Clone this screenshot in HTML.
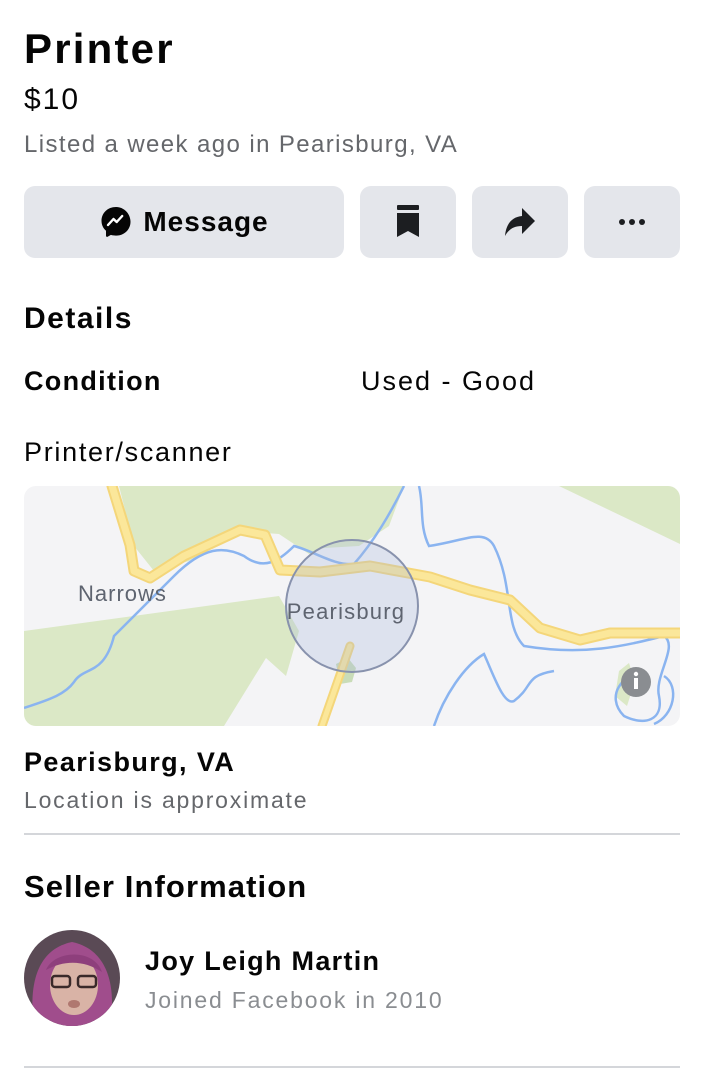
<!DOCTYPE html>
<html><head><meta charset="utf-8"><style>
*{margin:0;padding:0;box-sizing:border-box}
body{width:712px;height:1082px;background:#fff;font-family:"Liberation Sans",Arial,sans-serif;color:#050505;position:relative;overflow:hidden}
.a{position:absolute;white-space:nowrap;line-height:1}
.btn{position:absolute;top:186px;height:72px;background:#e4e6eb;border-radius:11px;display:flex;align-items:center;justify-content:center}
.hr{position:absolute;left:24px;width:656px;height:2px;background:#d4d6da}
</style></head><body>
<div class="a" style="left:24px;top:28px;font-size:42px;font-weight:bold;letter-spacing:2.2px">Printer</div>
<div class="a" style="left:24px;top:85px;font-size:30px;letter-spacing:2px">$10</div>
<div class="a" style="left:24px;top:133px;font-size:24px;color:#65676b;letter-spacing:1.4px">Listed a week ago in Pearisburg, VA</div>

<div class="btn" style="left:24px;width:320px">
<svg width="34" height="34" viewBox="0 0 34 34"><path d="M17 2C8.7 2 2.5 8 2.5 15.8c0 4.1 1.7 7.6 4.5 10v4.9c0 .9.9 1.4 1.6 1l3.3-1.8c1.6.5 3.3.7 5.1.7 8.3 0 14.5-6 14.5-13.8S25.3 2 17 2z" fill="#050505"/><path d="M9 20l5.5-6 3.2 3 5.5-6-5.5 6-3.2-3z" stroke="#fff" stroke-width="2.4" stroke-linejoin="round" stroke-linecap="round" fill="none"/></svg>
<span style="font-size:28px;font-weight:bold;margin-left:10px;letter-spacing:1px">Message</span></div>
<div class="btn" style="left:360px;width:96px"><svg width="24" height="34" viewBox="0 0 24 34"><rect x="1" y="0" width="22" height="5" rx="1" fill="#1c1e21"/><path d="M1 8h22v24l-11-6-11 6z" fill="#1c1e21"/></svg></div>
<div class="btn" style="left:472px;width:96px"><svg width="34" height="34" viewBox="0 0 34 34"><path d="M19 3l13 13-13 13v-8C11 21 6 24 2 31 3 20 8 12 19 11z" fill="#1c1e21"/></svg></div>
<div class="btn" style="left:584px;width:96px"><svg width="28" height="8" viewBox="0 0 28 8"><circle cx="4" cy="4" r="3" fill="#1c1e21"/><circle cx="14" cy="4" r="3" fill="#1c1e21"/><circle cx="24" cy="4" r="3" fill="#1c1e21"/></svg></div>

<div class="a" style="left:24px;top:304px;font-size:30px;font-weight:bold;letter-spacing:1.5px">Details</div>
<div class="a" style="left:24px;top:368px;font-size:27px;font-weight:bold;letter-spacing:1.3px">Condition</div>
<div class="a" style="left:361px;top:368px;font-size:27px;letter-spacing:2px">Used - Good</div>
<div class="a" style="left:24px;top:439px;font-size:27px;letter-spacing:1.7px">Printer/scanner</div>

<svg style="position:absolute;left:24px;top:486px;border-radius:12px" width="656" height="240" viewBox="0 0 656 240">
<rect width="656" height="240" fill="#f4f4f6"/>
<path d="M95 0H380L365 40 335 60 300 62 285 68 255 48 215 45 165 75 130 85 110 60z" fill="#dbe8c6"/>
<path d="M0 240V145L255 110 275 145 262 190 242 172 200 240z" fill="#dbe8c6"/>
<path d="M535 0H656V58z" fill="#dbe8c6"/>
<path d="M595 185l10-8 6 18-8 25-12-10z" fill="#dbe8c6"/>
<path d="M312 178l12-6 8 10-4 14-12 2z" fill="#c9dcb8"/>
<g fill="none" stroke="#8ab4f0" stroke-width="2.5">
<path d="M0 222C20 215 40 210 50 196 60 180 80 190 90 150 100 140 110 130 150 90 180 60 200 60 220 70 240 85 255 75 270 60 290 65 310 80 330 78 350 55 365 30 380 0"/>
<path d="M395 0C400 20 395 40 405 60 440 55 460 42 470 60 490 100 480 140 500 160 560 170 600 160 640 150"/>
<path d="M640 150C655 160 630 190 635 210 640 235 620 240 600 230 580 210 600 185 620 190"/>
<path d="M410 240C420 210 440 180 460 168 470 190 480 220 490 215 510 200 500 190 530 185"/>
<path d="M640 190C656 200 650 230 630 238"/>
</g>
<g fill="none" stroke-linecap="round" stroke-linejoin="round">
<path d="M88 0L106 59 110 85 126 92 160 70 216 44 241 49 256 84 296 86 346 80 406 91 446 104 486 114 516 142 556 154 586 147 656 147" stroke="#f4d67a" stroke-width="11"/>
<path d="M88 0L106 59 110 85 126 92 160 70 216 44 241 49 256 84 296 86 346 80 406 91 446 104 486 114 516 142 556 154 586 147 656 147" stroke="#fbe79a" stroke-width="7"/>
<path d="M326 160L298 240" stroke="#f4d67a" stroke-width="9"/>
<path d="M326 160L298 240" stroke="#fbe79a" stroke-width="5"/>
</g>
<circle cx="328" cy="120" r="66" fill="rgba(170,185,220,0.3)" stroke="#8892ad" stroke-width="2"/>
<text x="54" y="115" font-size="22" letter-spacing="1" fill="#5e6470" font-family="Liberation Sans,sans-serif">Narrows</text>
<text x="322" y="133" font-size="22" letter-spacing="1.2" fill="#5e6470" text-anchor="middle" font-family="Liberation Sans,sans-serif">Pearisburg</text>
<circle cx="612" cy="196" r="15" fill="#8a8d91"/>
<circle cx="612" cy="188" r="2.2" fill="#fff"/><rect x="610" y="192" width="4" height="11" fill="#fff"/>
</svg>

<div class="a" style="left:24px;top:749px;font-size:27px;font-weight:bold;letter-spacing:1.4px">Pearisburg, VA</div>
<div class="a" style="left:24px;top:789px;font-size:23px;color:#65676b;letter-spacing:1.8px">Location is approximate</div>
<div class="hr" style="top:833px"></div>
<div class="a" style="left:24px;top:871px;font-size:31px;font-weight:bold;letter-spacing:1.1px">Seller Information</div>
<svg style="position:absolute;left:24px;top:930px" width="96" height="96" viewBox="0 0 96 96">
<defs><clipPath id="c"><circle cx="48" cy="48" r="48"/></clipPath></defs>
<g clip-path="url(#c)">
<rect width="96" height="96" fill="#5a4a55"/>
<path d="M10 96C5 60 10 20 48 12 86 20 92 60 86 96z" fill="#a04d8c"/>
<ellipse cx="50" cy="55" rx="24" ry="30" fill="#d9b3a6"/>
<path d="M22 40C30 20 70 18 78 42 60 30 40 30 22 40z" fill="#8e3f7c"/>
<rect x="28" y="46" width="18" height="11" rx="3" fill="none" stroke="#3a2a2a" stroke-width="2.5"/>
<rect x="54" y="46" width="18" height="11" rx="3" fill="none" stroke="#3a2a2a" stroke-width="2.5"/>
<ellipse cx="50" cy="74" rx="6" ry="4" fill="#b07870"/>
</g></svg>
<div class="a" style="left:145px;top:948px;font-size:27px;font-weight:bold;letter-spacing:1.3px">Joy Leigh Martin</div>
<div class="a" style="left:145px;top:989px;font-size:23px;color:#8a8d91;letter-spacing:1.8px">Joined Facebook in 2010</div>
<div class="hr" style="top:1066px"></div>
</body></html>
